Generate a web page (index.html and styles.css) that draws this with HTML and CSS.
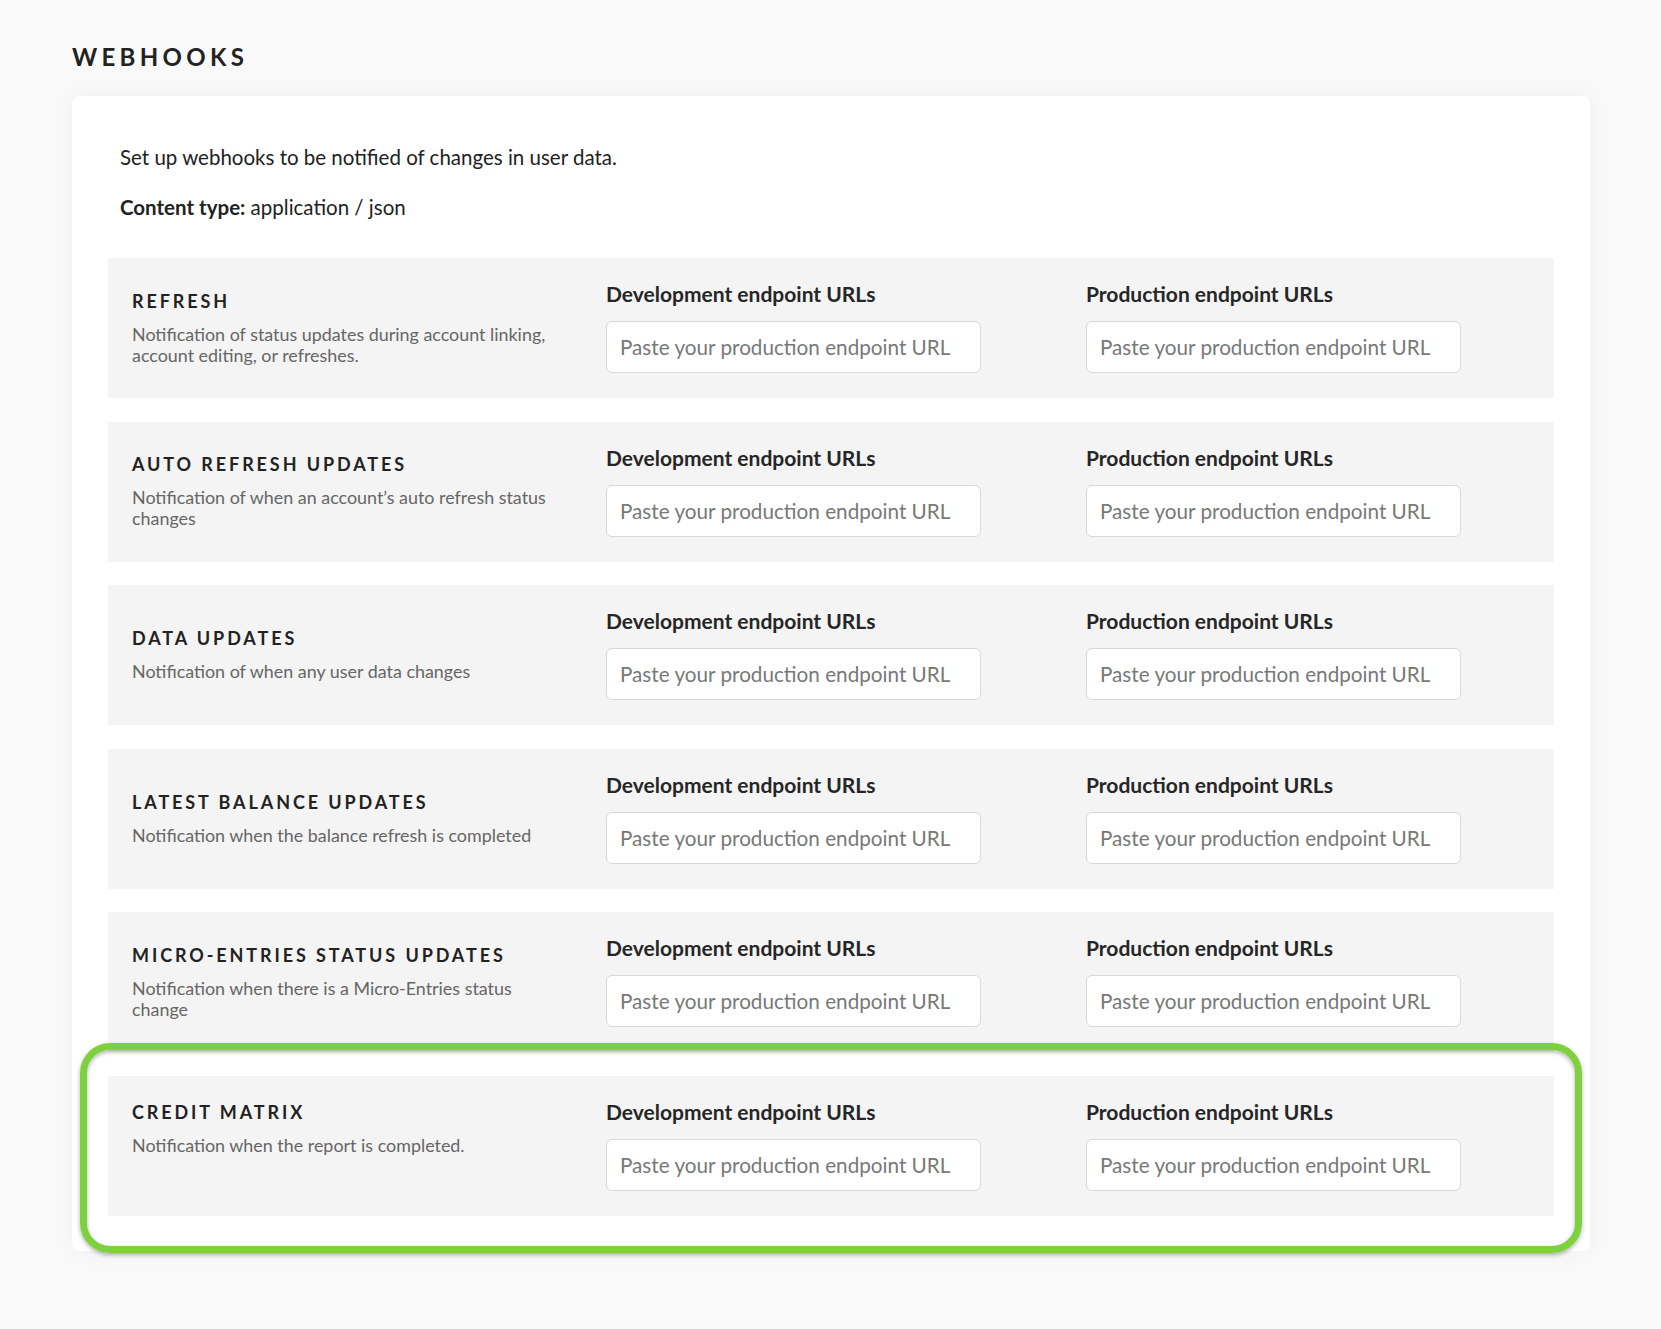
FILE: index.html
```html
<!DOCTYPE html>
<html lang="en">
<head>
<meta charset="utf-8">
<title>Webhooks</title>
<link rel="stylesheet" href="styles.css">
</head>
<body>
<main class="page">
  <h1 class="page-title">WEBHOOKS</h1>
  <div class="card">
    <div class="intro">
      <p class="intro-line">Set up webhooks to be notified of changes in user data.</p>
      <p class="intro-line"><strong>Content type:</strong> application / json</p>
    </div>
    <div class="hooks">
      <section class="hook">
        <div class="hook-info">
          <h2 class="hook-title">REFRESH</h2>
          <p class="hook-desc">Notification of status updates during account linking, account editing, or refreshes.</p>
        </div>
        <div class="field"><label class="field-label">Development endpoint URLs</label><input class="field-input" type="text" placeholder="Paste your production endpoint URL"></div>
        <div class="field"><label class="field-label">Production endpoint URLs</label><input class="field-input" type="text" placeholder="Paste your production endpoint URL"></div>
      </section>
      <section class="hook">
        <div class="hook-info">
          <h2 class="hook-title">AUTO REFRESH UPDATES</h2>
          <p class="hook-desc">Notification of when an account’s auto refresh status changes</p>
        </div>
        <div class="field"><label class="field-label">Development endpoint URLs</label><input class="field-input" type="text" placeholder="Paste your production endpoint URL"></div>
        <div class="field"><label class="field-label">Production endpoint URLs</label><input class="field-input" type="text" placeholder="Paste your production endpoint URL"></div>
      </section>
      <section class="hook">
        <div class="hook-info">
          <h2 class="hook-title">DATA UPDATES</h2>
          <p class="hook-desc">Notification of when any user data changes</p>
        </div>
        <div class="field"><label class="field-label">Development endpoint URLs</label><input class="field-input" type="text" placeholder="Paste your production endpoint URL"></div>
        <div class="field"><label class="field-label">Production endpoint URLs</label><input class="field-input" type="text" placeholder="Paste your production endpoint URL"></div>
      </section>
      <section class="hook">
        <div class="hook-info">
          <h2 class="hook-title">LATEST BALANCE UPDATES</h2>
          <p class="hook-desc">Notification when the balance refresh is completed</p>
        </div>
        <div class="field"><label class="field-label">Development endpoint URLs</label><input class="field-input" type="text" placeholder="Paste your production endpoint URL"></div>
        <div class="field"><label class="field-label">Production endpoint URLs</label><input class="field-input" type="text" placeholder="Paste your production endpoint URL"></div>
      </section>
      <section class="hook">
        <div class="hook-info">
          <h2 class="hook-title">MICRO-ENTRIES STATUS UPDATES</h2>
          <p class="hook-desc">Notification when there is a Micro-Entries status change</p>
        </div>
        <div class="field"><label class="field-label">Development endpoint URLs</label><input class="field-input" type="text" placeholder="Paste your production endpoint URL"></div>
        <div class="field"><label class="field-label">Production endpoint URLs</label><input class="field-input" type="text" placeholder="Paste your production endpoint URL"></div>
      </section>
      <section class="hook hook--new">
        <div class="hook-info">
          <h2 class="hook-title">CREDIT MATRIX</h2>
          <p class="hook-desc">Notification when the report is completed.</p>
        </div>
        <div class="field"><label class="field-label">Development endpoint URLs</label><input class="field-input" type="text" placeholder="Paste your production endpoint URL"></div>
        <div class="field"><label class="field-label">Production endpoint URLs</label><input class="field-input" type="text" placeholder="Paste your production endpoint URL"></div>
        <div class="highlight" aria-hidden="true"></div>
      </section>
    </div>
  </div>
</main>
</body>
</html>
```

FILE: styles.css
```css
* { box-sizing: border-box; }

html, body {
  margin: 0;
  padding: 0;
  background: #f9f9f9;
}

body {
  font-family: Lato, "Open Sans", "Liberation Sans", sans-serif;
  color: #222;
}

.page {
  padding: 42px 71px 80px 72px;
}

.page-title {
  margin: 0 0 25px;
  font-size: 24px;
  line-height: 29px;
  font-weight: 700;
  letter-spacing: 4.3px;
  color: #222;
}

.card {
  background: #fff;
  border-radius: 8px;
  box-shadow: 0 0 24px rgba(0, 0, 0, 0.045);
  padding: 47px 36px 35px;
}

.intro {
  padding: 0 12px;
  margin-bottom: 37px;
}

.intro-line {
  margin: 0;
  font-size: 20.5px;
  line-height: 28px;
  color: #222;
}

.intro-line + .intro-line {
  margin-top: 22px;
}

.intro-line strong {
  font-weight: 700;
}

.hooks {
  display: flex;
  flex-direction: column;
  gap: 23.5px;
}

.hook {
  position: relative;
  display: grid;
  grid-template-columns: 474px 480px 1fr;
  align-items: center;
  background: #f4f4f4;
  padding: 24px 24px 25px;
  min-height: 140px;
}

.hook-info {
  max-width: 425px;
}

.hook--new .hook-info {
  align-self: start;
  padding-top: 1px;
}

.hook-title {
  margin: 0 0 12px;
  font-size: 18px;
  line-height: 22px;
  font-weight: 700;
  letter-spacing: 2.9px;
  color: #222;
}

.hook-desc {
  margin: 0;
  font-size: 17.9px;
  line-height: 21px;
  color: #666;
}

.field {
  display: flex;
  flex-direction: column;
  gap: 15px;
}

.field-label {
  font-size: 21px;
  line-height: 24px;
  font-weight: 700;
  color: #262626;
}

.field-input {
  width: 375px;
  height: 52px;
  padding: 0 13px;
  border: 1px solid #d8d8d8;
  border-radius: 6px;
  background: #fff;
  font-family: Lato, "Open Sans", "Liberation Sans", sans-serif;
  font-size: 20.7px;
  color: #222;
  outline: none;
}

.field-input::placeholder {
  color: #787878;
}

.highlight {
  position: absolute;
  top: -33px;
  left: -28px;
  right: -28px;
  bottom: -37px;
  border: 7px solid #7ed13e;
  border-radius: 30px;
  box-shadow: 0 2px 4px rgba(0, 0, 0, 0.3), inset 0 2px 4px rgba(0, 0, 0, 0.3);
  pointer-events: none;
}
```
